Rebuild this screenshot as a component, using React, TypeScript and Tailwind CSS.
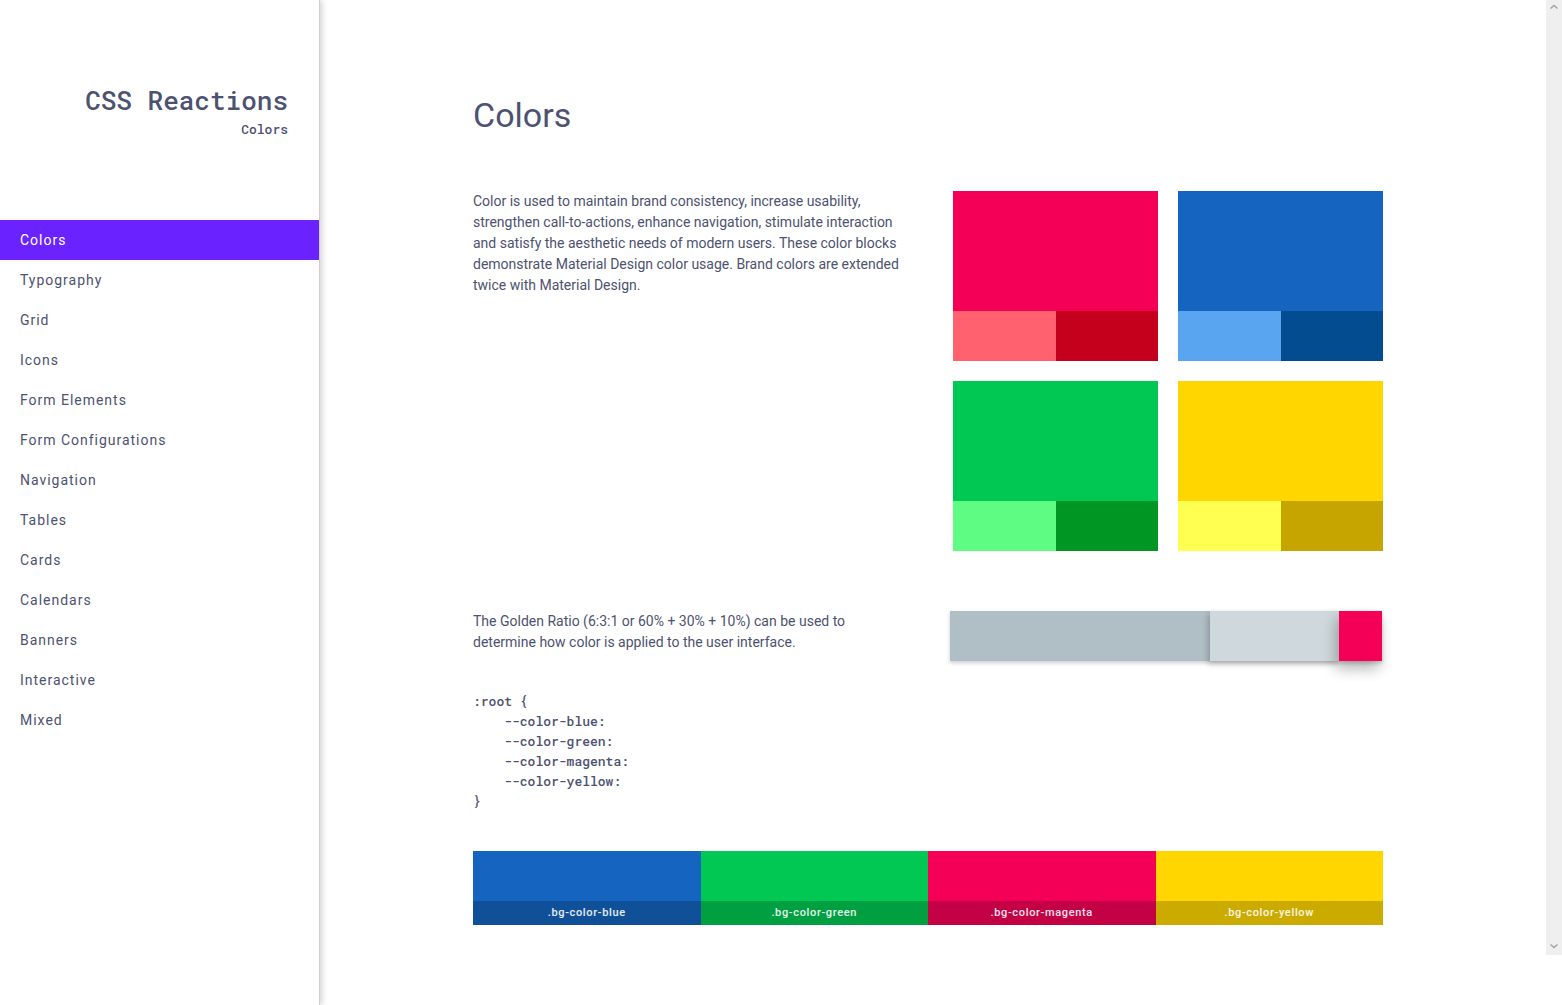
import React from "react";

const nav = [
  "Colors",
  "Typography",
  "Grid",
  "Icons",
  "Form Elements",
  "Form Configurations",
  "Navigation",
  "Tables",
  "Cards",
  "Calendars",
  "Banners",
  "Interactive",
  "Mixed",
];

const blocks = [
  { main: "bg-[#f50057]", light: "bg-[#ff616f]", dark: "bg-[#c4001d]" },
  { main: "bg-[#1565c0]", light: "bg-[#5aa5f0]", dark: "bg-[#024c8f]" },
  { main: "bg-[#00c853]", light: "bg-[#5efc82]", dark: "bg-[#009624]" },
  { main: "bg-[#ffd600]", light: "bg-[#ffff52]", dark: "bg-[#c7a500]" },
];

const swatches = [
  { bg: "bg-[#1565c0]", label: ".bg-color-blue" },
  { bg: "bg-[#00c853]", label: ".bg-color-green" },
  { bg: "bg-[#f50057]", label: ".bg-color-magenta" },
  { bg: "bg-[#ffd600]", label: ".bg-color-yellow" },
];

const mono = { fontFamily: '"Roboto Mono", "DejaVu Sans Mono", "Liberation Mono", monospace' };

export default function App() {
  return (
    <div
      className="flex h-[1005px] w-[1562px] overflow-hidden bg-white text-[#4d5270]"
      style={{ fontFamily: 'Roboto, "Noto Sans", "Liberation Sans", sans-serif' }}
    >
      {/* Sidebar */}
      <aside className="relative z-10 flex h-full w-[320px] shrink-0 flex-col border-r border-[#cfcfcf] bg-white shadow-[2px_0_6px_rgba(0,0,0,0.18)]">
        <div className="flex h-[220px] flex-col items-end pr-[31px] pt-[83px]">
          <div className="text-[26px] font-medium leading-[34px] text-[#4d5270]" style={mono}>
            CSS Reactions
          </div>
          <div className="mt-[3px] text-[13px] font-medium leading-[18px] text-[#4d5270]" style={mono}>
            Colors
          </div>
        </div>
        <nav className="flex flex-col">
          {nav.map((item, i) => (
            <div
              key={item}
              className={
                i === 0
                  ? "flex h-10 items-center bg-[#6a22ff] pl-5 text-[14px] tracking-[0.07em] text-white"
                  : "flex h-10 items-center pl-5 text-[14px] tracking-[0.07em] text-[#4d5270]"
              }
            >
              {item}
            </div>
          ))}
        </nav>
      </aside>

      {/* Main */}
      <main className="flex-1 pl-[153px] pt-[93px]">
        <div className="w-[910px]">
          <h1 className="text-[34px] font-normal leading-[44px] text-[#4d5270]">Colors</h1>

          <div className="mt-[54px] flex justify-between">
            <p className="w-[440px] text-[14px] leading-[21px] text-[#4d5270]">
              Color is used to maintain brand consistency, increase usability, strengthen call-to-actions, enhance
              navigation, stimulate interaction and satisfy the aesthetic needs of modern users. These color blocks
              demonstrate Material Design color usage. Brand colors are extended twice with Material Design.
            </p>
            <div className="grid w-[430px] grid-cols-2 gap-5">
              {blocks.map((b, i) => (
                <div key={i} className="flex flex-col">
                  <div className={`h-[120px] ${b.main}`} />
                  <div className="flex h-[50px]">
                    <div className={`flex-1 ${b.light}`} />
                    <div className={`flex-1 ${b.dark}`} />
                  </div>
                </div>
              ))}
            </div>
          </div>

          <div className="mt-[60px] flex justify-between">
            <p className="w-[400px] text-[14px] leading-[21px] text-[#4d5270]">
              The Golden Ratio (6:3:1 or 60% + 30% + 10%) can be used to determine how color is applied to the user
              interface.
            </p>
            <div className="mr-[1px] flex h-[50px] w-[432px] shadow-[0_2px_4px_rgba(0,0,0,0.2)]">
              <div className="relative z-0 w-[260px] bg-[#b0bec5]" />
              <div className="relative z-10 w-[129px] bg-[#cfd8dc] shadow-[-2px_3px_6px_rgba(0,0,0,0.22)]" />
              <div className="relative z-20 w-[43px] bg-[#f50057] shadow-[-3px_8px_14px_rgba(0,0,0,0.28)]" />
            </div>
          </div>

          <pre className="mt-[30px] text-[13px] font-medium leading-[20px] text-[#4d5270]" style={mono}>
{`:root {
    --color-blue:
    --color-green:
    --color-magenta:
    --color-yellow:
}`}
          </pre>

          <div className="mt-[40px] flex">
            {swatches.map((s) => (
              <div key={s.label} className={`flex flex-1 flex-col ${s.bg}`}>
                <div className="h-[50px]" />
                <div className="flex h-[24px] items-center justify-center bg-black/20 pt-[1px] text-[11px] font-medium tracking-[0.06em] text-white/90">
                  {s.label}
                </div>
              </div>
            ))}
          </div>
        </div>
      </main>

      {/* Scrollbar */}
      <div className="flex h-[955px] w-4 shrink-0 flex-col items-center justify-between bg-[#efefef] py-[2px]">
        <svg width="10" height="8" viewBox="0 0 10 8" className="mt-[1px]">
          <path d="M1.5 5.5 L5 2.5 L8.5 5.5" fill="none" stroke="#a3a3a3" strokeWidth="1.5" />
        </svg>
        <svg width="10" height="8" viewBox="0 0 10 8" className="mb-[3px]">
          <path d="M1.5 2.5 L5 5.5 L8.5 2.5" fill="none" stroke="#a3a3a3" strokeWidth="1.5" />
        </svg>
      </div>
    </div>
  );
}
